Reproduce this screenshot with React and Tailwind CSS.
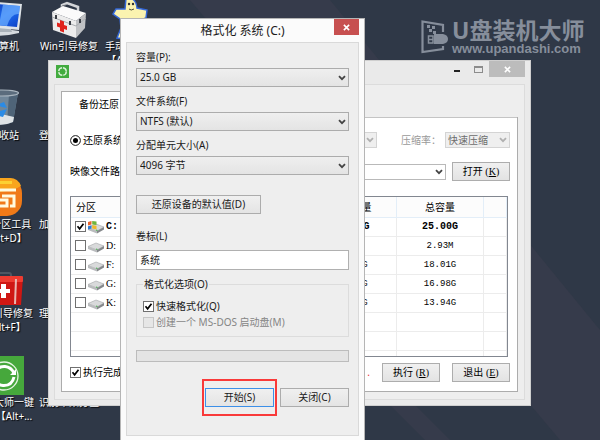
import React from 'react'
import clsx from 'clsx'

const volumes = [
  { name: 'C:', free: '12.71G', total: '25.00G', system: true },
  { name: 'D:', free: '2.20M', total: '2.93M' },
  { name: 'F:', free: '10.35G', total: '18.01G' },
  { name: 'G:', free: '11.02G', total: '16.98G' },
  { name: 'K:', free: '10.87G', total: '13.94G' },
]

function Chevron({ className }) {
  return (
    <svg viewBox="0 0 8 6" className={clsx('pointer-events-none absolute right-[3px] top-1/2 h-[6px] w-2 -translate-y-1/2', className)}>
      <path d="M1 1.2 L4 4.2 L7 1.2" fill="none" stroke="currentColor" strokeWidth="1.8" />
    </svg>
  )
}

/* ---------- desktop icons ---------- */

function ComputerIcon() {
  return (
    <svg viewBox="0 0 40 40" className="h-10 w-10">
      <defs>
        <linearGradient id="screen" x1="0" y1="0" x2="1" y2="1">
          <stop offset="0" stopColor="#0a2fae" />
          <stop offset="0.55" stopColor="#1f6df0" />
          <stop offset="1" stopColor="#0b3fc4" />
        </linearGradient>
      </defs>
      <path d="M6 32 Q18 28 35 31 L35 33 Q18 37 6 35 Z" fill="#d5dadf" />
      <path d="M14 24 L26 26 L28 32 L14 32 Z" fill="#aab2ba" />
      <path d="M0 1 L38 4 L35 30 L0 27 Z" fill="#dfe4e8" />
      <path d="M1 3 L36 6 L33 27 L1 24 Z" fill="url(#screen)" />
      <path d="M19 4.5 L36 6 L35 14 Q27 13 23 26 L15 25 Z" fill="#6fb0ff" opacity="0.7" />
    </svg>
  )
}

function BinIcon() {
  return (
    <svg viewBox="0 0 40 40" className="h-10 w-10">
      <path d="M2 4 L34 4 L29 33 Q18 38 7 34 Z" fill="#71879a" />
      <path d="M25 5 L34 4 L29 33 L23 35 Z" fill="#4f6478" />
      <path d="M7 27 L17 25 L30 28 L29 33 Q18 38 7 34 Z" fill="#dfe3e6" />
      <ellipse cx="18" cy="4" rx="16.500" ry="3" fill="#5b6c7d" stroke="#a9b5bf" strokeWidth="1.200" />
      <path d="M12 16 L20 13 L23 19 L18 18 Z M23 20 L19 28 L12 26 L16 22 Z" fill="#2b8be6" />
    </svg>
  )
}

function PartitionIcon() {
  return (
    <svg viewBox="0 0 40 40" className="h-10 w-10">
      <rect x="0" y="0" width="38" height="38" rx="15" fill="#f07a18" />
      <path d="M2 9 Q4 0 14 0 L26 0 Q34 0 37 8 Q28 14 2 15 Z" fill="#f9a51d" />
      <path d="M16 3 H28 V6 H16 Z" fill="#fddc3a" opacity="0.8" />
      <path d="M32 12 H11 Q8 12 8 15 V25 Q8 28 11 28 H23 V22 H16" fill="none" stroke="#fffbe0" strokeWidth="3" />
      <path d="M18 18 H30 V28 H26" fill="none" stroke="#fffbe0" strokeWidth="3" />
    </svg>
  )
}

function RedKitIcon() {
  return (
    <svg viewBox="0 0 40 40" className="h-10 w-10">
      <path d="M11 12 V8 Q11 6 13 6 H25 Q27 6 27 8 V12" fill="none" stroke="#4d5662" strokeWidth="2" />
      <path d="M0 10 H39 L37 38 H0 Z" fill="#cf1713" />
      <rect x="0" y="9" width="39" height="6" rx="1" fill="#ee3b30" />
      <path d="M31 12 H33 L32 37 H30 Z" fill="#e9b6b0" />
      <path d="M17 17 H22 V22 H26 V26 H22 V31 H17 V26 H13 V22 H17 Z" fill="#fff" />
    </svg>
  )
}

function RecoverIcon() {
  return (
    <svg viewBox="0 0 40 40" className="h-10 w-10">
      <rect width="40" height="39" fill="#46a83c" />
      <circle cx="20" cy="20" r="14" fill="none" stroke="#e6f5e3" strokeWidth="1.300" />
      <path d="M11 18 Q13 10 21 10.500 Q27 11 30 17" fill="none" stroke="#fff" strokeWidth="3" />
      <path d="M30 21 Q28 30 19 29.500 Q13 29 10 23" fill="none" stroke="#fff" strokeWidth="3" />
      <path d="M32 13 V19 H26 Z M8 27 V21 H14 Z" fill="#fff" />
    </svg>
  )
}

function FirstAidIcon() {
  return (
    <svg viewBox="0 0 40 40" className="h-10 w-10">
      <path d="M13 12 L13 5 L18 3 L29 7 V14" fill="none" stroke="#d3d5d8" strokeWidth="2.500" />
      <path d="M13 12 V6 L17 5" fill="none" stroke="#6c7077" strokeWidth="1" />
      <path d="M3 12 L14 6 L37 13 L27 21 Z" fill="#fbfbfb" />
      <path d="M3 12 L27 21 V38 L4 30 Z" fill="#ececec" />
      <path d="M27 21 L37 13 L36 28 L27 38 Z" fill="#bfc1c4" />
      <path d="M3 17 L27 26 L37 18" fill="none" stroke="#a9acb0" strokeWidth="1" />
      <path d="M7 15 v4 M21 21 v4 M31 19 v4" stroke="#3c4047" strokeWidth="2" />
      <path d="M11 20 L15 21.500 V25 L18 26 V30 L15 29 V32.500 L11 31 V27.500 L8 26.500 V22.500 L11 23.500 Z" fill="#e0231c" />
    </svg>
  )
}

function GhostIcon() {
  return (
    <svg viewBox="0 0 40 40" className="h-10 w-10">
      <path d="M17 -2 Q27 -3 28 8 L38 10 L37 18 L31 20 L33 34 L25 40 L8 38 L12 28 L11 19 L4 14 L7 9 L16 9 Z" fill="#fbf3b0" stroke="#3568d8" strokeWidth="1.500" />
      <circle cx="20" cy="4" r="1.200" fill="#333" />
      <circle cx="24" cy="4" r="1.200" fill="#333" />
      <path d="M20 9 Q22 11 25 9" stroke="#4b4b3a" fill="none" />
    </svg>
  )
}

const desktopItems = [
  { icon: <ComputerIcon />, label: '计算机' },
  { icon: <FirstAidIcon />, label: 'Win引导修复' },
  { icon: <GhostIcon />, label: '手动Ghost', hotkey: '【Alt+G】' },
  { icon: <BinIcon />, label: '回收站' },
  { label: '登陆密码清除' },
  null,
  { icon: <PartitionIcon />, label: 'DG分区工具', hotkey: '【Alt+D】' },
  { label: '加载更多驱动' },
  null,
  { icon: <RedKitIcon />, label: 'Win引导修复', hotkey: '【Alt+F】' },
  { label: '理顺盘符工具' },
  null,
  { icon: <RecoverIcon />, label: '装机大师一键', hotkey: '恢复【Alt+...' },
  { label: '识别苹果分区' },
  null,
]

function DesktopItem({ item }) {
  if (!item) return <div />
  return (
    <div className="flex flex-col items-center whitespace-nowrap text-center text-[10px] leading-[14px] text-white [text-shadow:1px_1px_1px_#000]">
      <div className="h-[39px]">{item.icon}</div>
      <span>{item.label}</span>
      {item.hotkey && <span>{item.hotkey}</span>}
    </div>
  )
}

function Watermark() {
  return (
    <div className="absolute left-[421px] top-[18px] flex items-start gap-[3px] text-[#868e9b]">
      <svg viewBox="0 0 28 34" className="mt-[2px] h-[34px] w-7">
        <path d="M22 12 V5 L1.500 1.500 V32 L22 29 V26" fill="none" stroke="currentColor" strokeWidth="2.200" />
        <path d="M6 5 h3 v3 h-3 Z M11 6 h3 v3 h-3 Z M8 9 h3 v3 h-3 Z M12 11 h3 v3 h-3 Z" fill="currentColor" />
        <path d="M13 14 H22 Q27 15 27 19 Q27 23 22 24 H13 Z" fill="currentColor" />
        <path d="M7.500 16 H12 V23 H7.500 Z M7.500 19.500 H12" fill="none" stroke="currentColor" strokeWidth="1.500" />
      </svg>
      <div className="flex flex-col whitespace-nowrap font-bold">
        <span className="text-[23px] leading-6">U盘装机大师</span>
        <a href="#home" className="font-['Liberation_Sans'] text-[13px] leading-[14px]">www.upandashi.com</a>
      </div>
    </div>
  )
}

/* ---------- backup window ---------- */

function DriveIcon({ system }) {
  return (
    <svg viewBox="0 0 18 14" className="h-[14px] w-[18px] shrink-0">
      <path d="M1 7.500 L9 4 L17 7 L10 11 Z" fill="#d9dadb" stroke="#a2a4a6" strokeWidth="0.600" />
      <path d="M1 7.500 L10 11 V13.500 L1 10 Z" fill="#b9bbbd" />
      <path d="M10 11 L17 7 V9.500 L10 13.500 Z" fill="#85888b" />
      <path d="M9 10 l1.500 0.500" stroke="#49b04e" strokeWidth="1.300" />
      {system && (
        <g>
          <path d="M1 2 L4.500 1 V4.500 L1 5.500 Z" fill="#e8622c" />
          <path d="M5.200 1 L9.500 1.500 V5 L5.200 4.500 Z" fill="#6fb53a" />
          <path d="M1 6.200 L4.500 5.200 V8.500 L1 9.500 Z" fill="#2f7bd0" />
          <path d="M5.200 5.200 L9.500 5.700 V9.500 L5.200 8.500 Z" fill="#f0b92a" />
        </g>
      )}
    </svg>
  )
}

function CheckBox({ className, ...props }) {
  return (
    <span className="relative inline-flex shrink-0">
      <input
        type="checkbox"
        className={clsx('peer h-[11px] w-[11px] appearance-none border border-[#707070] bg-white disabled:border-[#c6c6c6] disabled:bg-[#e6e6e6]', className)}
        {...props}
      />
      <svg viewBox="0 0 11 11" className="pointer-events-none absolute inset-0 hidden h-[11px] w-[11px] text-black peer-checked:block">
        <path d="M2.500 5.300 L4.600 7.800 L8.500 2.800" fill="none" stroke="currentColor" strokeWidth="1.700" />
      </svg>
    </span>
  )
}

function ToolButton({ label, hotkey }) {
  return (
    <button className="h-[19px] w-[58px] whitespace-nowrap border border-[#adadad] bg-linear-to-b from-[#f0f0f0] to-[#e3e3e3] text-[10px] leading-4 text-black">
      {label} <span className="font-['Liberation_Serif']">(<u>{hotkey}</u>)</span>
    </button>
  )
}

function VolumeTable() {
  return (
    <div className="h-[161px] overflow-hidden border border-[#828790] bg-white">
      <table className="w-full table-fixed border-collapse text-center text-[10px] leading-4">
        <colgroup>
          <col />
          <col />
          <col className="w-[78px]" />
          <col className="w-[90px]" />
          <col className="w-[87px]" />
          <col className="w-[23px]" />
        </colgroup>
        <thead>
          <tr className="h-5 border-b border-[#e3eef8] bg-[#fcfcfc] [&>th]:border-r [&>th]:border-[#e3eef8] [&>th]:p-0 [&>th]:font-normal">
            <th className="text-left"><span className="pl-[5px]">分区</span></th>
            <th>卷标</th>
            <th>格式</th>
            <th>可用容量</th>
            <th>总容量</th>
            <th></th>
          </tr>
        </thead>
        <tbody className="[&_td]:border-r [&_td]:border-[#ececec] [&_td]:p-0">
          {volumes.map((v) => (
            <tr
              key={v.name}
              className={clsx(
                "h-[19px] border-b border-[#ececec] font-['Liberation_Mono']",
                v.system ? 'text-[10px] font-bold' : 'text-[9px]'
              )}
            >
              <td>
                <label className="flex items-center gap-px pl-1">
                  <CheckBox defaultChecked={v.system} />
                  <DriveIcon system={v.system} />
                  <span className={v.system ? 'text-[10px]' : "font-['Liberation_Serif'] text-[10px]"}>{v.name}</span>
                </label>
              </td>
              <td></td>
              <td>NTFS</td>
              <td>{v.free}</td>
              <td>{v.total}</td>
              <td></td>
            </tr>
          ))}
          {[0, 1, 2].map((i) => (
            <tr key={i} className="h-[19px] border-b border-[#ececec]">
              <td></td><td></td><td></td><td></td><td></td><td></td>
            </tr>
          ))}
        </tbody>
      </table>
    </div>
  )
}

function BackupWindow() {
  return (
    <section className="absolute left-12 top-[60px] w-[483px] border border-[#cfcfcf] bg-[#eaeaea] px-[5px] pb-[5px] text-[10px] text-black">
      <header className="flex h-[23px] items-start justify-between pl-[2px]">
        <svg viewBox="0 0 13 13" className="mt-[4px] h-[13px] w-[13px]">
          <rect width="13" height="13" fill="#43ab3f" />
          <circle cx="6.500" cy="6.500" r="3.800" fill="none" stroke="#d9f2d6" strokeWidth="1.400" strokeDasharray="5 1" />
        </svg>
        <div className="flex items-center">
          <button aria-label="最小化" className="flex h-4 w-5 items-center justify-center">
            <span className="mt-1 h-[2px] w-[6px] bg-[#222]"></span>
          </button>
          <button aria-label="最大化" className="flex h-4 w-[22px] items-center justify-center">
            <span className="h-[7px] w-[9px] border border-t-2 border-[#8c8c8c]"></span>
          </button>
          <button aria-label="关闭" className="flex h-4 w-9 items-center justify-center bg-[#bcbcbc] text-white">
            <svg viewBox="0 0 8 8" className="h-[7px] w-[7px]">
              <path d="M1 1 L7 7 M7 1 L1 7" stroke="currentColor" strokeWidth="1.800" />
            </svg>
          </button>
        </div>
      </header>

      <div className="border border-[#dcdcdc] bg-[#eeeeee] px-[6px] pb-[7px] pt-[6px]">
        <button className="block h-[26px] w-20 border border-b-0 border-[#acacac] bg-white pl-[17px] text-left">备份还原</button>
        <div className="border border-t-0 border-[#acacac] bg-white">
          <div className="ml-[79px] border-t border-[#c4c4c4]"></div>
          <div className="pb-[9px] pl-[8px] pr-[7px] pt-[13px]">
            <div className="flex h-[18px] items-center justify-between">
              <label className="flex items-center gap-[2px]">
                <input type="radio" name="mode" defaultChecked className="h-[11px] w-[11px] appearance-none rounded-full border border-[#555] bg-black [box-shadow:inset_0_0_0_2px_#fff]" />
                还原系统
              </label>
              <div className="flex items-center gap-1 text-[#9a9a9a]">
                <span className="relative mr-5">
                  <select aria-label="模式" disabled className="block h-4 w-20 appearance-none border border-[#d4d4d4] bg-[#efefef]">
                    <option></option>
                  </select>
                  <Chevron className="text-[#b0b0b0]" />
                </span>
                <label htmlFor="ratio">压缩率：</label>
                <span className="relative text-[#6d6d6d]">
                  <select id="ratio" disabled className="block h-4 w-[65px] appearance-none border border-[#d4d4d4] bg-[#efefef] pl-[2px] leading-[14px]">
                    <option>快速压缩</option>
                  </select>
                  <Chevron className="text-[#b0b0b0]" />
                </span>
              </div>
            </div>

            <div className="mt-[13px] flex items-center gap-[6px]">
              <label htmlFor="image" className="shrink-0">映像文件路径</label>
              <span className="relative min-w-0 flex-1">
                <select id="image" className="block h-4 w-full appearance-none border border-[#b9b9b9] bg-white">
                  <option></option>
                </select>
                <Chevron className="text-[#444]" />
              </span>
              <ToolButton label="打开" hotkey="K" />
            </div>

            <div className="mt-[15px] pr-[2px]">
              <VolumeTable />
            </div>

            <div className="mt-[6px] flex items-center gap-3">
              <label className="flex items-center gap-[2px]">
                <CheckBox defaultChecked />
                执行完成后
              </label>
              <span className="flex-1 text-right text-[#e33]">.</span>
              <ToolButton label="执行" hotkey="R" />
              <ToolButton label="退出" hotkey="E" />
            </div>
          </div>
        </div>
      </div>
    </section>
  )
}

/* ---------- format dialog ---------- */

function SelectField({ id, label, value }) {
  return (
    <div className="flex flex-col">
      <label htmlFor={id} className="h-[25px] pt-[2px] leading-6">{label}</label>
      <span className="relative">
        <select id={id} className="block h-[19px] w-full appearance-none border border-[#acacac] bg-linear-to-b from-[#efefef] to-[#e4e4e4] pl-[3px] leading-[17px]">
          <option>{value}</option>
        </select>
        <Chevron className="text-[#444]" />
      </span>
    </div>
  )
}

function FormatDialog() {
  const button = 'h-[19px] border bg-linear-to-b from-[#f0f0f0] to-[#e4e4e4] leading-[17px]'
  return (
    <section role="dialog" aria-label="格式化 系统 (C:)" className="absolute left-[120px] top-[18px] w-[245px] border border-[#b5b5b5] bg-[#fbfbfb] px-[5px] pb-[5px] text-[10px] text-[#1a1a1a]">
      <header className="relative flex h-[23px] items-center justify-center">
        <h1 className="text-xs">格式化 系统 (C:)</h1>
        <button aria-label="关闭" className="absolute right-0 top-0 flex h-4 w-[25px] items-center justify-center bg-[#c75050] text-white">
          <svg viewBox="0 0 8 8" className="h-[7px] w-[7px]">
            <path d="M1 1 L7 7 M7 1 L1 7" stroke="currentColor" strokeWidth="1.800" />
          </svg>
        </button>
      </header>

      <form className="flex flex-col border border-[#d9d9d9] bg-[#eeeeee] px-[9px] pb-7">
        <SelectField id="capacity" label="容量(P):" value="25.0 GB" />
        <SelectField id="fs" label="文件系统(F)" value="NTFS (默认)" />
        <SelectField id="unit" label="分配单元大小(A)" value="4096 字节" />

        <button type="button" className={clsx(button, 'mt-5 w-[125px] border-[#acacac]')}>还原设备的默认值(D)</button>

        <label htmlFor="label" className="mt-[10px] h-[26px] leading-6">卷标(L)</label>
        <input id="label" defaultValue="系统" className="h-5 border border-[#b0b0b0] bg-white pb-[2px] pl-[3px]" />

        <fieldset className="mt-2 border border-[#dcdcdc] pb-[6px] pl-[6px]">
          <legend className="px-px leading-3">格式化选项(O)</legend>
          <label className="mt-2 flex h-4 items-center gap-[2px]">
            <CheckBox defaultChecked />
            快速格式化(Q)
          </label>
          <label className="flex h-4 items-center gap-[2px] text-[#858585]">
            <CheckBox disabled />
            创建一个 MS-DOS 启动盘(M)
          </label>
        </fieldset>

        <div role="progressbar" aria-label="进度" className="mt-[13px] h-3 border border-[#bcbcbc] bg-[#e4e4e4]"></div>

        <div className="mt-[26px] flex justify-end gap-[6px]">
          <span className="relative flex">
            <button type="button" className={clsx(button, 'w-[69px] border-[#3c8fe8]')}>开始(S)</button>
            <span className="pointer-events-none absolute -inset-x-[3px] -inset-y-[9px] border-2 border-[#f93a3a]"></span>
          </span>
          <button type="button" className={clsx(button, 'w-[69px] border-[#acacac]')}>关闭(C)</button>
        </div>
      </form>
    </section>
  )
}

function App() {
  return (
    <main className="relative h-screen w-full overflow-hidden bg-[#2f3847] font-['Noto_Sans','Noto_Sans_CJK_SC',sans-serif]">
      <svg viewBox="0 0 600 440" preserveAspectRatio="none" className="absolute inset-0 h-full w-full">
        <path d="M190 0 H330 L600 330 V440 H560 Z" fill="#363b4b" />
        <path d="M385 400 H410 L450 440 H425 Z" fill="#363b4b" />
      </svg>

      <div className="absolute -left-[26px] top-0 grid auto-rows-[89px] grid-cols-[60px_70px_50px]">
        {desktopItems.map((item, i) => (
          <DesktopItem key={i} item={item} />
        ))}
      </div>

      <Watermark />
      <BackupWindow />
      <FormatDialog />
    </main>
  )
}

export default App
